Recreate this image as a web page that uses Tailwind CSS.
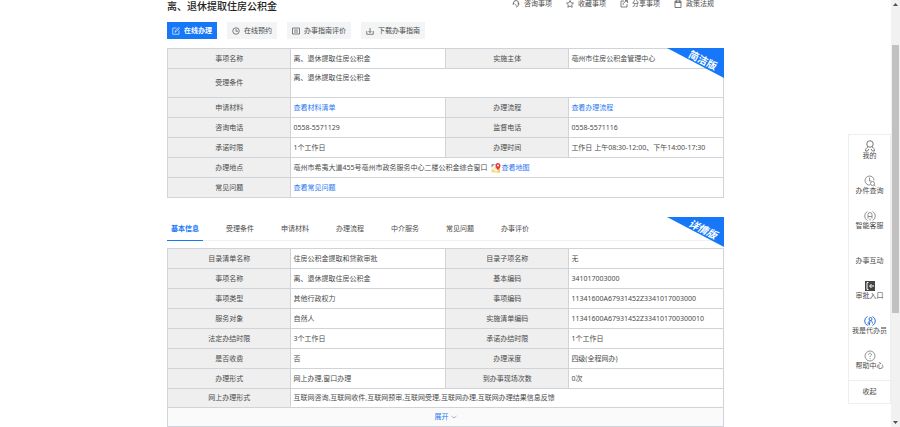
<!DOCTYPE html>
<html lang="zh-CN">
    <head>
        <meta charset="UTF-8">
        <meta name="viewport" content="width=device-width, initial-scale=1.0">
        <script src="https://cdn.jsdelivr.net/npm/@tailwindcss/browser@4"></script>
        <title>离、退休提取住房公积金</title>
    </head>
    <body class="h-screen flex overflow-hidden bg-white text-[#4a4a4a] text-[7px] leading-[10px] font-['Noto_Sans','Noto_Sans_CJK_SC',sans-serif]">
        <main class="flex-1 min-w-0">
            <div class="w-5/8 mx-auto">
                <header class="flex items-start justify-between h-[10px]">
                    <h1 class="text-[10px] leading-3 font-medium text-[#222]">离、退休提取住房公积金</h1>
                    <nav class="flex gap-[14px] pr-[10px] leading-2">
                        <a href="#" class="flex items-center gap-1">
                            <svg class="size-2" viewBox="0 0 16 16" fill="none" stroke="#555" stroke-width="1.6"><path d="M3 8V6a5 5 0 0 1 10 0v2M1 8h4M11 8h4M13 9c0 3-2 4-5 5M6 9l3 2"/></svg>
                            咨询事项
                        </a>
                        <a href="#" class="flex items-center gap-1">
                            <svg class="size-2" viewBox="0 0 16 16" fill="none" stroke="#555" stroke-width="1.5" stroke-linejoin="round"><path d="M8 1l2.1 4.6 4.9.6-3.6 3.4.9 5L8 12.2 3.7 14.6l.9-5L1 6.2l4.9-.6z"/></svg>
                            收藏事项
                        </a>
                        <a href="#" class="flex items-center gap-1">
                            <svg class="size-2" viewBox="0 0 16 16" fill="none" stroke="#555" stroke-width="1.5"><path d="M8 2H2v12h12V8M6 10c0-4 3-7 8-8M10 1h5v5"/></svg>
                            分享事项
                        </a>
                        <a href="#" class="flex items-center gap-1">
                            <svg class="size-2" viewBox="0 0 16 16" fill="none" stroke="#555" stroke-width="1.6"><path d="M2 2h12v13H2zM2 5h12M5 1v3M11 1v3"/></svg>
                            政策法规
                        </a>
                    </nav>
                </header>

                <div class="flex gap-[10px] mt-3">
                    <button class="flex items-center gap-1 h-[17px] px-[5px] bg-[#1677f9] text-white font-bold">
                        <svg class="size-2" viewBox="0 0 16 16" fill="none" stroke="currentColor" stroke-width="1.3"><path d="M14 7v7.5H1.5V2H9M6 10.5l1-3L13.5 1 15 2.5 8.5 9z"/></svg>
                        在线办理
                    </button>
                    <button class="flex items-center gap-1 h-[17px] px-[5px] bg-[#f3f4f5]">
                        <svg class="size-2" viewBox="0 0 16 16" fill="none" stroke="currentColor" stroke-width="1.4"><circle cx="8" cy="8" r="6.5"/><path d="M8 4v4.5h4"/></svg>
                        在线预约
                    </button>
                    <button class="flex items-center gap-1 h-[17px] px-[5px] bg-[#f3f4f5]">
                        <svg class="size-2" viewBox="0 0 16 16" fill="none" stroke="currentColor" stroke-width="1.4"><path d="M1 2h14v12H1zM4 6h8M4 10h8"/></svg>
                        办事指南评价
                    </button>
                    <button class="flex items-center gap-1 h-[17px] px-[5px] bg-[#f3f4f5]">
                        <svg class="size-2" viewBox="0 0 16 16" fill="none" stroke="currentColor" stroke-width="1.4"><path d="M1.5 8v6.5h13V8M8 2v9M5 8l3 3 3-3"/></svg>
                        下载办事指南
                    </button>
                </div>

                <section class="relative mt-[9px]">
                    <table class="w-full table-fixed border-collapse text-left [&_th]:border [&_th]:border-[#d0d4d8] [&_th]:bg-[#efefef] [&_th]:font-normal [&_th]:text-center [&_td]:border [&_td]:border-[#d0d4d8] [&_td]:px-[2px] [&_a]:text-[#2b78f0]">
                        <colgroup>
                            <col class="w-[22.2%]">
                            <col class="w-[27.8%]">
                            <col class="w-[22.2%]">
                            <col class="w-[27.8%]">
                        </colgroup>
                        <tr class="h-5"><th>事项名称</th><td>离、退休提取住房公积金</td><th>实施主体</th><td>亳州市住房公积金管理中心</td></tr>
                        <tr class="h-[29px]"><th>受理条件</th><td colspan="3" class="align-top pt-1">离、退休提取住房公积金</td></tr>
                        <tr class="h-5"><th>申请材料</th><td><a href="#">查看材料清单</a></td><th>办理流程</th><td><a href="#">查看办理流程</a></td></tr>
                        <tr class="h-5"><th>咨询电话</th><td>0558-5571129</td><th>监督电话</th><td>0558-5571116</td></tr>
                        <tr class="h-5"><th>承诺时限</th><td>1个工作日</td><th>办理时间</th><td>工作日 上午08:30-12:00、下午14:00-17:30</td></tr>
                        <tr class="h-5">
                            <th>办理地点</th>
                            <td colspan="3">
                                <div class="flex items-center">
                                    <span class="mr-1">亳州市希夷大道455号亳州市政务服务中心二楼公积金综合窗口</span>
                                    <svg class="size-[10px]" viewBox="0 0 20 20">
                                        <path d="M1 2h17v17H1z" fill="#f3dc8b"/>
                                        <path d="M1 2h7L1 9z" fill="#8a9fd8"/>
                                        <path d="M1 10l9-8h3L1 14zM6 10l12 9h-4L4 12z" fill="#fff"/>
                                        <path d="M10 19l8-7v7z" fill="#f0cf5e"/>
                                        <path d="M14 14C10 9 9 7 9 5a5 5 0 0 1 10 0c0 2-1 4-5 9z" fill="#e5333f"/>
                                        <circle cx="14" cy="5" r="2" fill="#fff"/>
                                    </svg>
                                    <a href="#">查看地图</a>
                                </div>
                            </td>
                        </tr>
                        <tr class="h-5"><th>常见问题</th><td colspan="3"><a href="#">查看常见问题</a></td></tr>
                    </table>
                    <svg class="absolute top-0 right-0 w-[57px] h-[30px]" viewBox="0 0 57 30">
                        <path d="M0 0h57v30z" fill="#1677f9"/>
                        <text x="36" y="16" transform="rotate(27 36 12)" text-anchor="middle" font-size="10" font-weight="700" fill="#fff">简洁版</text>
                    </svg>
                </section>

                <section class="relative mt-[19px]">
                    <nav class="flex gap-[19px] h-6 mb-[7px] border-b border-[#f2f2f2]">
                        <button class="w-9 h-6 border-b border-[#1677f9] text-[#1677f9] font-bold">基本信息</button>
                        <button class="w-9 h-6">受理条件</button>
                        <button class="w-9 h-6">申请材料</button>
                        <button class="w-9 h-6">办理流程</button>
                        <button class="w-9 h-6">中介服务</button>
                        <button class="w-9 h-6">常见问题</button>
                        <button class="w-9 h-6">办事评价</button>
                    </nav>
                    <table class="w-full table-fixed border-collapse text-left [&_th]:border [&_th]:border-[#d0d4d8] [&_th]:bg-[#efefef] [&_th]:font-normal [&_th]:text-center [&_td]:border [&_td]:border-[#d0d4d8] [&_td]:px-[2px]">
                        <colgroup>
                            <col class="w-[22.2%]">
                            <col class="w-[27.8%]">
                            <col class="w-[22.2%]">
                            <col class="w-[27.8%]">
                        </colgroup>
                        <tr class="h-5"><th>目录清单名称</th><td>住房公积金提取和贷款审批</td><th>目录子项名称</th><td>无</td></tr>
                        <tr class="h-5"><th>事项名称</th><td>离、退休提取住房公积金</td><th>基本编码</th><td>341017003000</td></tr>
                        <tr class="h-5"><th>事项类型</th><td>其他行政权力</td><th>事项编码</th><td>11341600A67931452Z3341017003000</td></tr>
                        <tr class="h-5"><th>服务对象</th><td>自然人</td><th>实施清单编码</th><td>11341600A67931452Z334101700300010</td></tr>
                        <tr class="h-5"><th>法定办结时限</th><td>3个工作日</td><th>承诺办结时限</th><td>1个工作日</td></tr>
                        <tr class="h-5"><th>是否收费</th><td>否</td><th>办理深度</th><td>四级(全程网办)</td></tr>
                        <tr class="h-5"><th>办理形式</th><td>网上办理,窗口办理</td><th>到办事现场次数</th><td>0次</td></tr>
                        <tr class="h-[19px]"><th>网上办理形式</th><td colspan="3">互联网咨询,互联网收件,互联网预审,互联网受理,互联网办理,互联网办理结果信息反馈</td></tr>
                        <tr class="h-[19px]">
                            <td colspan="4" class="bg-[#fafafa]">
                                <button class="flex items-center gap-[2px] mx-auto text-[#2b78f0]">
                                    展开
                                    <svg class="size-[6px]" viewBox="0 0 12 12" fill="none" stroke="#8b9cb5" stroke-width="1.5"><path d="M1 4l5 4 5-4"/></svg>
                                </button>
                            </td>
                        </tr>
                    </table>
                    <svg class="absolute top-0 right-0 w-[57px] h-[30px]" viewBox="0 0 57 30">
                        <path d="M0 0h57v30z" fill="#1677f9"/>
                        <text x="36" y="16" transform="rotate(27 36 12)" text-anchor="middle" font-size="10" font-weight="700" font-style="italic" fill="#fff">详情版</text>
                    </svg>
                </section>
            </div>
        </main>

        <!-- floating toolbar -->
        <aside class="fixed right-[9px] top-[134px] w-[43px] border border-[#eee] bg-white text-center leading-2">
            <div class="flex flex-col gap-[15px] pt-[5px] pb-[10px]">
                <a href="#" class="flex flex-col items-center">
                    <svg class="size-3" viewBox="0 0 24 24" fill="none" stroke="#666" stroke-width="1.8"><circle cx="12" cy="8" r="6.5"/><path d="M8 14c-3 1-5 4-5 8h4l3-4M16 14c3 1 5 4 5 8h-4l-3-4"/></svg>
                    我的
                </a>
                <a href="#" class="flex flex-col items-center">
                    <svg class="size-3" viewBox="0 0 24 24" fill="none" stroke="#777" stroke-width="1.6"><path d="M12 20a9 9 0 1 1 8-9M11 5v7h4"/><circle cx="17" cy="17" r="4"/><path d="M20 20l3 2"/></svg>
                    办件查询
                </a>
                <a href="#" class="flex flex-col items-center">
                    <svg class="size-3" viewBox="0 0 24 24" fill="none" stroke="#777" stroke-width="1.6"><path d="M7 21a10 10 0 0 1 0-18M17 3a10 10 0 0 1 0 18M8 17V9a4 4 0 0 1 8 0v8M8 13h8M12 17v4"/></svg>
                    智能客服
                </a>
                <a href="#" class="pt-3">办事互动</a>
                <a href="#" class="flex flex-col items-center">
                    <svg class="size-3" viewBox="0 0 24 24"><path d="M2 2h20v20H2z" fill="#444"/><path d="M9 5H6v14h3M20 12h-8M15 8l-4 4 4 4" fill="none" stroke="#fff" stroke-width="2"/></svg>
                    审批入口
                </a>
                <a href="#" class="flex flex-col items-center">
                    <svg class="size-3" viewBox="0 0 24 24" fill="none" stroke="#2f6fd0" stroke-width="2"><path d="M7 21a10 10 0 0 1 0-18M17 3a10 10 0 0 1 0 18"/><circle cx="13" cy="8" r="3"/><path d="M8 19c0-10 9-10 9-2M12 13l-2 8"/></svg>
                    我是代办员
                </a>
                <a href="#" class="flex flex-col items-center">
                    <svg class="size-3" viewBox="0 0 24 24" fill="none" stroke="#777" stroke-width="1.6"><circle cx="12" cy="12" r="10"/><path d="M9 10c0-5 6-4 6-1 0 2-3 2-3 5M12 16v2"/></svg>
                    帮助中心
                </a>
            </div>
            <button class="w-full h-[23px] border-t border-[#eee]">收起</button>
        </aside>

        <!-- scroll bar -->
        <div class="w-[9px] flex flex-col items-center justify-between py-[3px] bg-[#f1f1f1]">
            <svg class="w-[5px] h-[3px]" viewBox="0 0 5 3"><path d="M0 3L2.5 0 5 3z" fill="#505050"/></svg>
            <div class="w-[7px] flex-1 pt-[39px] pb-[108px]">
                <div class="h-full bg-[#c1c1c1]"></div>
            </div>
            <svg class="w-[5px] h-[3px]" viewBox="0 0 5 3"><path d="M0 0h5L2.5 3z" fill="#505050"/></svg>
        </div>
    </body>
</html>
